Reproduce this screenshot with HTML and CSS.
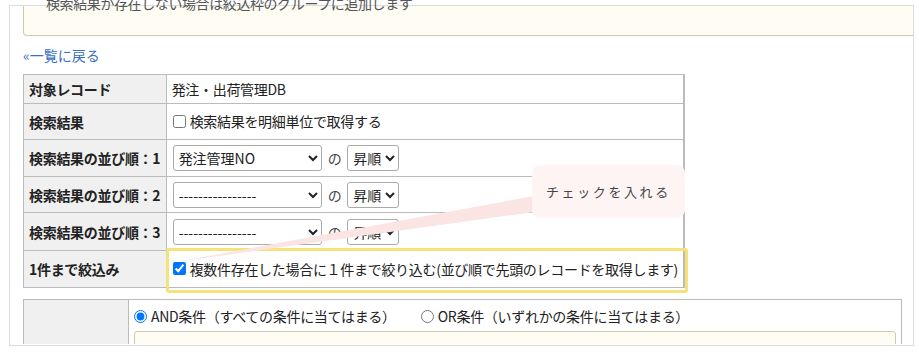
FILE: index.html
```html
<!DOCTYPE html>
<html lang="ja">
<head>
<meta charset="utf-8">
<link rel="stylesheet" href="styles.css">
</head>
<body>
<div class="frame">
  <div class="notice"><p class="notice-text">検索結果が存在しない場合は絞込枠のグループに追加します</p></div>
  <a class="back" href="#">«一覧に戻る</a>
  <table class="main">
    <tr class="r1"><th>対象レコード</th><td>発注・出荷管理DB</td></tr>
    <tr class="r2"><th>検索結果</th><td><label class="chk"><input type="checkbox">検索結果を明細単位で取得する</label></td></tr>
    <tr class="r3"><th>検索結果の並び順：1</th><td>
      <select class="sel-field"><option>発注管理NO</option></select><span class="no">の</span><select class="sel-order"><option>昇順</option></select>
    </td></tr>
    <tr class="r4"><th>検索結果の並び順：2</th><td>
      <select class="sel-field"><option>----------------</option></select><span class="no">の</span><select class="sel-order"><option>昇順</option></select>
    </td></tr>
    <tr class="r5"><th>検索結果の並び順：3</th><td>
      <select class="sel-field"><option>----------------</option></select><span class="no">の</span><select class="sel-order"><option>昇順</option></select>
    </td></tr>
    <tr class="r6"><th>1件まで絞込み</th><td><label class="chk"><input type="checkbox" checked>複数件存在した場合に１件まで絞り込む(並び順で先頭のレコードを取得します)</label></td></tr>
  </table>
  <div class="cond-wrap">
    <table class="cond">
      <tr><th></th><td>
        <div class="radios">
          <label class="rad"><input type="radio" name="c" checked>AND条件（すべての条件に当てはまる）</label>
          <label class="rad"><input type="radio" name="c">OR条件（いずれかの条件に当てはまる）</label>
        </div>
        <div class="cond-box"></div>
      </td></tr>
    </table>
  </div>
</div>
<div class="highlight"></div>
<svg class="tail" width="919" height="352" viewBox="0 0 919 352"><polygon points="534,196 534,212 176,262" fill="#fbe4e4"/></svg>
<div class="bubble">チェックを入れる</div>
</body>
</html>
```
FILE: styles.css
```css
html, body {
  margin: 0;
  padding: 0;
  background: #fff;
}
body {
  font-family: "Noto Sans CJK JP", "Liberation Sans", sans-serif;
  font-size: 14px;
  color: #222;
}
.frame {
  margin: 5px 0 0 9px;
  width: 905px;
  height: 341px;
  box-sizing: border-box;
  border: 1px solid #dcdcdc;
  padding-left: 13px;
}
.notice {
  display: flow-root;
  height: 29px;
  background: #fffcf3;
  border-left: 1px solid #d2c9ad;
  border-bottom: 1px solid #d2c9ad;
  border-bottom-left-radius: 4px;
}
.notice-text {
  margin: -11px 0 0 22px;
  font-size: 14px;
  line-height: 16px;
  color: #555;
  letter-spacing: -0.4px;
}
.back {
  display: block;
  width: max-content;
  margin-top: 10px;
  color: #3a6fc4;
  text-decoration: none;
  font-size: 14px;
  line-height: 18px;
  letter-spacing: 0;
}
.main {
  margin-top: 10px;
  width: 662px;
  border-collapse: collapse;
  border: 1px solid #bbb;
  border-right: 2px solid #bbb;
}
.main th, .main td {
  border: 1px solid #bbb;
  padding: 0 5px;
  text-align: left;
  white-space: nowrap;
  line-height: 18px;
}
.main th {
  width: 134px;
  background: #f0f0f0;
  font-weight: bold;
  color: #222;
  letter-spacing: -0.3px;
}
.main td {
  background: #fff;
  letter-spacing: -0.3px;
}
.r1 th, .r1 td { height: 28px; }
.r2 th, .r2 td { height: 35px; }
.r3 th, .r3 td { height: 36px; }
.r4 th, .r4 td { height: 35px; }
.r5 th, .r5 td { height: 37px; }
.r6 th, .r6 td { height: 36px; }
.chk {
  display: inline-flex;
  align-items: center;
}
.chk input {
  margin: 0 4px 0 1px;
  width: 13px;
  height: 13px;
}
select {
  font-family: "Noto Sans CJK JP", "Liberation Sans", sans-serif;
  font-size: 14px;
  height: 26px;
  border: 1px solid #aaa;
  border-radius: 3px;
  background: #fff;
  color: #222;
  padding: 0 1px;
  vertical-align: middle;
}
.sel-field { width: 149px; margin-left: 1px; }
.sel-order { width: 52px; }
.no {
  display: inline-block;
  margin: 0 6px;
  vertical-align: middle;
  color: #444;
}
.cond-wrap {
  margin-top: 11px;
  height: 45px;
  overflow: hidden;
}
.cond {
  width: 879px;
  border-collapse: collapse;
  border: 1px solid #bbb;
}
.cond th {
  width: 104px;
  background: #f0f0f0;
  border: 1px solid #bbb;
  padding: 0;
}
.cond td {
  border: 1px solid #bbb;
  padding: 7px 5px 10px 5px;
  vertical-align: top;
}
.radios {
  display: flex;
  gap: 25px;
  line-height: 18px;
  letter-spacing: -0.3px;
}
.rad {
  display: inline-flex;
  align-items: center;
}
.rad input {
  margin: 0 4px 0 0;
  width: 13px;
  height: 13px;
}
.cond-box {
  margin-top: 6px;
  height: 40px;
  background: #fffcf3;
  border: 1px solid #d2c9ad;
  border-radius: 3px;
}
.highlight {
  position: absolute;
  left: 166px;
  top: 248px;
  width: 516px;
  height: 39px;
  border: 3px solid #f5e27a;
  border-radius: 3px;
}
.tail {
  position: absolute;
  left: 0;
  top: 0;
  pointer-events: none;
}
.bubble {
  position: absolute;
  left: 532px;
  top: 165px;
  width: 153px;
  height: 53px;
  box-sizing: border-box;
  background: #fff4f4;
  border-radius: 8px;
  padding-left: 14px;
  display: flex;
  align-items: center;
  font-size: 13px;
  letter-spacing: 2.6px;
  color: #444;
}
```
